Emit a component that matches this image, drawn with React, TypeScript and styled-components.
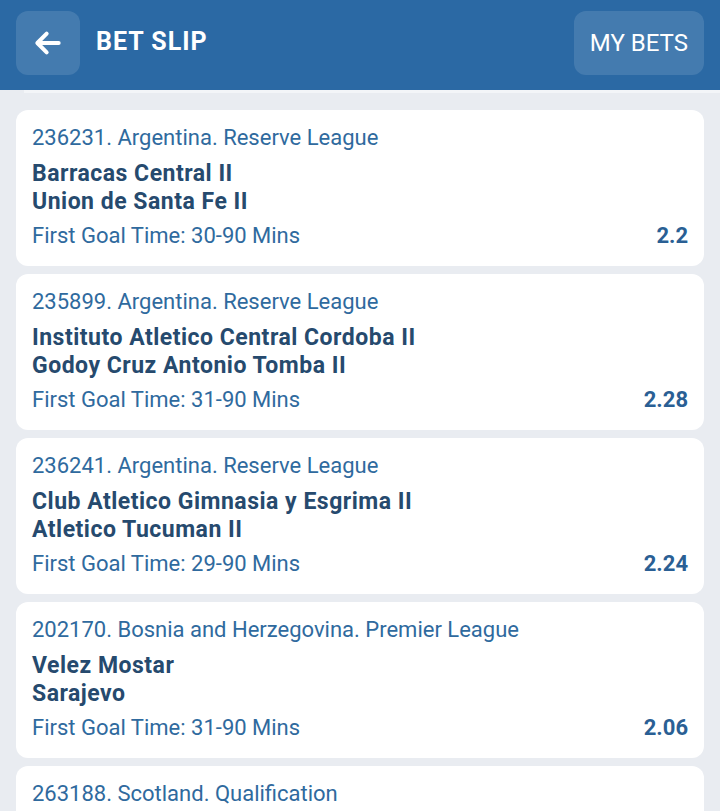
import React from "react";
import styled, { createGlobalStyle } from "styled-components";

const Global = createGlobalStyle`
  html, body { margin: 0; padding: 0; background: #e9ecf1; }
  body { font-family: Roboto, "Noto Sans", Arial, sans-serif; overflow: hidden; }
  * { box-sizing: border-box; }
`;

const Page = styled.div`
  width: 720px;
  height: 811px;
  overflow: hidden;
  background: #e9ecf1;
  display: flex;
  flex-direction: column;
`;

const Header = styled.header`
  height: 90px;
  flex: none;
  background: #2b69a4;
  display: flex;
  align-items: flex-start;
  padding: 11px 16px 0;
  gap: 16px;
`;

const IconButton = styled.button`
  width: 64px;
  height: 64px;
  border: none;
  border-radius: 12px;
  background: rgba(255, 255, 255, 0.12);
  display: flex;
  align-items: center;
  justify-content: center;
  padding: 0;
  color: #fff;
`;

const Title = styled.h1`
  margin: 0;
  flex: 1;
  color: #fff;
  font-size: 25px;
  line-height: 62px;
  font-weight: 700;
  letter-spacing: 1px;
`;

const TextButton = styled.button`
  height: 64px;
  padding: 0 16px;
  border: none;
  border-radius: 12px;
  background: rgba(255, 255, 255, 0.12);
  color: #fff;
  font-family: inherit;
  font-size: 24px;
  font-weight: 400;
`;

const Divider = styled.div`
  height: 3px;
  flex: none;
  background: #f3f5f8;
  margin-left: 24px;
`;

const List = styled.div`
  display: flex;
  flex-direction: column;
  gap: 8px;
  padding: 17px 16px 0;
`;

const Card = styled.div`
  background: #fff;
  border-radius: 12px;
  padding: 14px 16px 0;
  height: 156px;
  flex: none;
`;

const League = styled.div`
  color: #2f6a9e;
  font-size: 22px;
  line-height: 28px;
  margin-bottom: 8px;
`;

const Team = styled.div`
  color: #264a6e;
  font-size: 23px;
  font-weight: 700;
  letter-spacing: 0.5px;
  line-height: 28px;
`;

const Bottom = styled.div`
  display: flex;
  justify-content: space-between;
  align-items: center;
  margin-top: 6px;
  line-height: 28px;
`;

const Market = styled.div`
  color: #2f6a9e;
  font-size: 22px;
`;

const Odds = styled.div`
  color: #2a5f94;
  font-size: 22px;
  font-weight: 700;
`;

const bets = [
  { league: "236231. Argentina. Reserve League", home: "Barracas Central II", away: "Union de Santa Fe II", market: "First Goal Time: 30-90 Mins", odds: "2.2" },
  { league: "235899. Argentina. Reserve League", home: "Instituto Atletico Central Cordoba II", away: "Godoy Cruz Antonio Tomba II", market: "First Goal Time: 31-90 Mins", odds: "2.28" },
  { league: "236241. Argentina. Reserve League", home: "Club Atletico Gimnasia y Esgrima II", away: "Atletico Tucuman II", market: "First Goal Time: 29-90 Mins", odds: "2.24" },
  { league: "202170. Bosnia and Herzegovina. Premier League", home: "Velez Mostar", away: "Sarajevo", market: "First Goal Time: 31-90 Mins", odds: "2.06" },
  { league: "263188. Scotland. Qualification", home: "", away: "", market: "", odds: "" },
];

export default function App() {
  return (
    <Page>
      <Global />
      <Header>
        <IconButton aria-label="Back">
          <svg width="32" height="32" viewBox="0 0 24 24" fill="none" stroke="#fff" strokeWidth="3" strokeLinecap="round" strokeLinejoin="round">
            <path d="M20 12H5" />
            <path d="M11 5l-7 7 7 7" />
          </svg>
        </IconButton>
        <Title>BET SLIP</Title>
        <TextButton>MY BETS</TextButton>
      </Header>
      <Divider />
      <List>
        {bets.map((b) => (
          <Card key={b.league}>
            <League>{b.league}</League>
            <Team>{b.home}</Team>
            <Team>{b.away}</Team>
            <Bottom>
              <Market>{b.market}</Market>
              <Odds>{b.odds}</Odds>
            </Bottom>
          </Card>
        ))}
      </List>
    </Page>
  );
}
